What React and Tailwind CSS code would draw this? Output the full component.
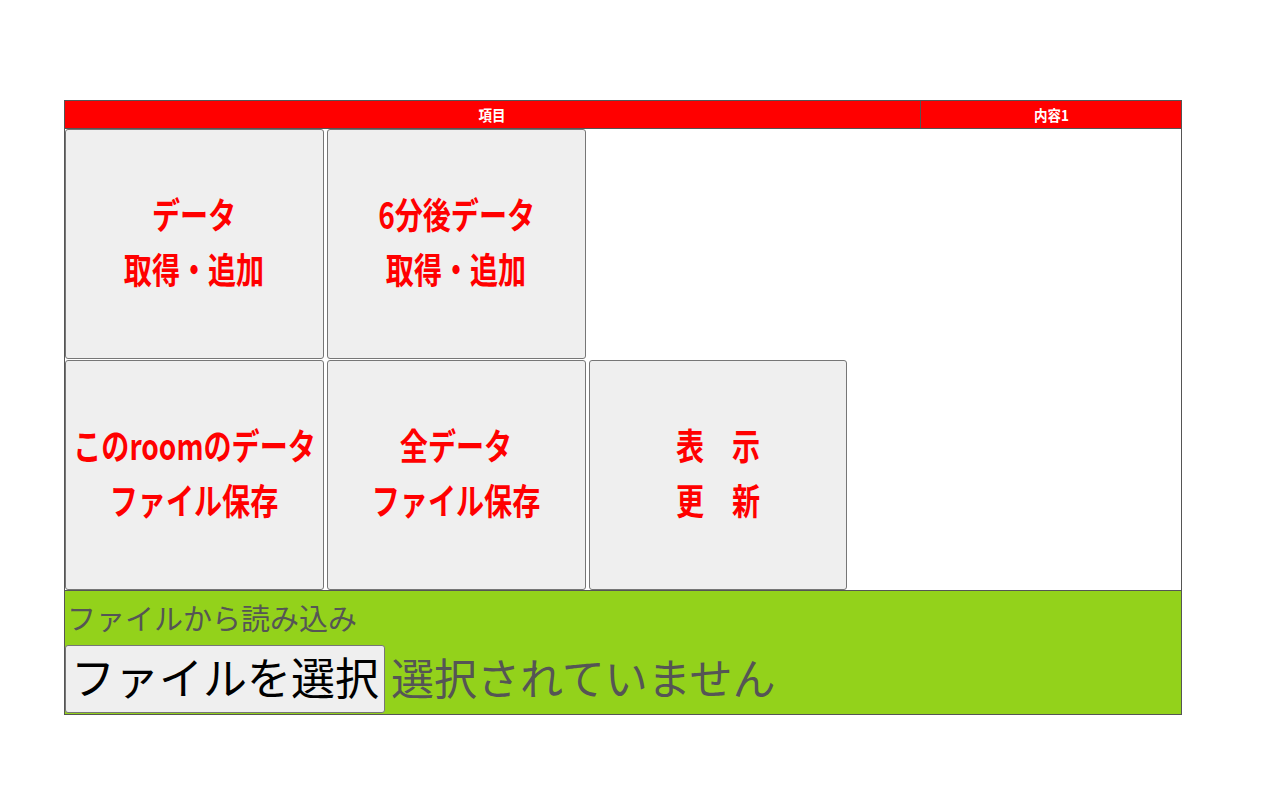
import React from "react";

const FONT = { fontFamily: '"Noto Sans CJK JP", "Noto Sans", sans-serif' };

function BigButton({ lines, w = "w-[259px]" }) {
  return (
    <button
      className={`h-full ${w} shrink-0 rounded-[3px] border border-[#767676] bg-[#efefef] flex flex-col items-center justify-center pb-[6px]`}
      style={FONT}
    >
      {lines.map((l, i) => (
        <span
          key={i}
          className="block whitespace-nowrap text-[36px] font-bold leading-[55px] text-[#ff0000] scale-x-[0.78]"
        >
          {l}
        </span>
      ))}
    </button>
  );
}

export default function App() {
  return (
    <div className="min-h-[800px] w-full bg-white pt-[100px] pl-[64px]" style={FONT}>
      <div className="w-[1118px] border border-[#555]">
        <div className="flex h-[28px] border-b border-[#555] bg-[#ff0000]">
          <div className="flex w-[856px] items-center justify-center border-r border-[#555]">
            <span className="inline-block text-[15px] font-bold leading-none text-white scale-x-[0.9]">項目</span>
          </div>
          <div className="flex flex-1 items-center justify-center">
            <span className="inline-block text-[15px] font-bold leading-none text-white scale-x-[0.9]">内容1</span>
          </div>
        </div>
        <div className="flex h-[461px] flex-col gap-[1px]">
          <div className="flex h-[230px] gap-[3px]">
            <BigButton lines={["データ", "取得・追加"]} />
            <BigButton lines={["6分後データ", "取得・追加"]} />
          </div>
          <div className="flex h-[230px] gap-[3px]">
            <BigButton lines={["このroomのデータ", "ファイル保存"]} />
            <BigButton lines={["全データ", "ファイル保存"]} />
            <BigButton lines={["表　示", "更　新"]} w="w-[258px]" />
          </div>
        </div>
        <div className="border-t border-[#555] bg-[#93d21b]">
          <div className="pl-[2px] pb-[2px] text-[29px] leading-[52px] text-[#555]">ファイルから読み込み</div>
          <div className="flex h-[69px] items-center pb-[1px]">
            <button className="h-[68px] rounded-[3px] border border-[#767676] bg-[#efefef] px-[5px] pb-[6px] text-[44px] leading-none text-black">
              ファイルを選択
            </button>
            <span className="ml-[6px] pb-[6px] text-[43px] leading-none text-[#555]">選択されていません</span>
          </div>
        </div>
      </div>
    </div>
  );
}
